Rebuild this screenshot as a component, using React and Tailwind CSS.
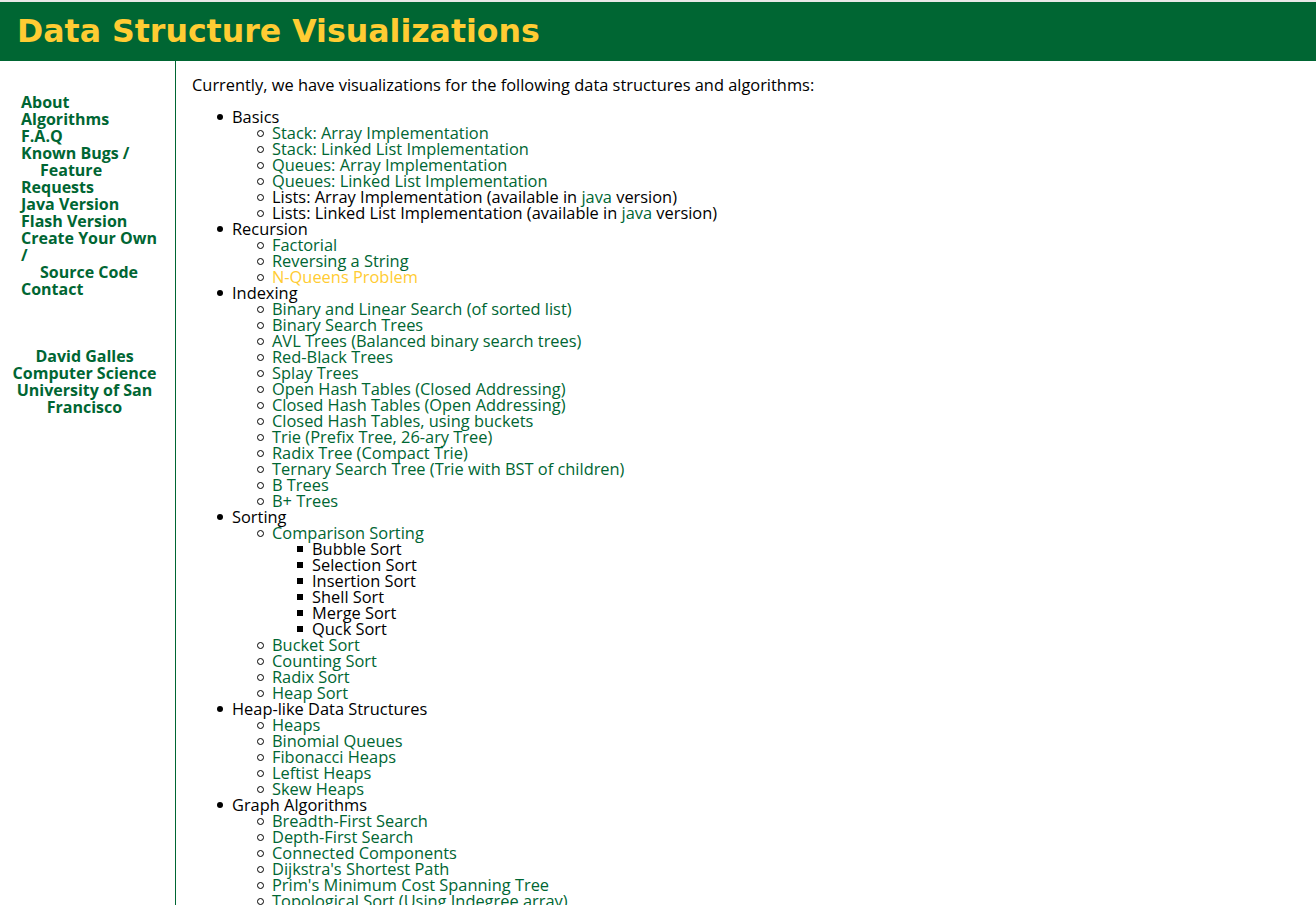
import React from "react";

function L({ children, y }) {
  return <span className={y ? "text-[#ffcc33]" : "text-[#006633]"}>{children}</span>;
}

const sub = (items) => (
  <ul className="pl-[40px]">
    {items.map((it, i) => (
      <li key={i} className="flex">
        <span className="w-[0px] relative">
          <span className="absolute left-[-15px] top-[5px] w-[7px] h-[7px] rounded-full border border-black"></span>
        </span>
        <span>{it}</span>
      </li>
    ))}
  </ul>
);

function Top({ label, children }) {
  return (
    <li className="flex flex-col">
      <div className="flex">
        <span className="w-0 relative">
          <span className="absolute left-[-15px] top-[5px] w-[6px] h-[6px] rounded-full bg-black"></span>
        </span>
        <span>{label}</span>
      </div>
      {children}
    </li>
  );
}

export default function App() {
  const font = { fontFamily: '"Open Sans", "Noto Sans", sans-serif' };
  return (
    <div className="min-h-[905px] bg-white" style={font}>
      <div className="h-[2px] bg-[#e8e8e8]"></div>
      <div className="h-[59px] bg-[#006633] flex items-center pl-[17px]">
        <h1
          className="text-[#ffcc33] text-[31.6px] font-bold leading-none"
          style={{ fontFamily: '"DejaVu Sans", Verdana, sans-serif' }}
        >
          Data Structure Visualizations
        </h1>
      </div>
      <div className="flex">
        <div className="w-[176px] shrink-0 border-r border-[#006633] min-h-[844px] pt-[33px] text-[16px] leading-[17px] font-bold text-[#006633]">
          <div className="pl-[21px]">
            <div>About</div>
            <div>Algorithms</div>
            <div>F.A.Q</div>
            <div>Known Bugs /</div>
            <div className="pl-[19px]">Feature</div>
            <div>Requests</div>
            <div>Java Version</div>
            <div>Flash Version</div>
            <div>Create Your Own</div>
            <div>/</div>
            <div className="pl-[19px]">Source Code</div>
            <div>Contact</div>
          </div>
          <div className="mt-[50px] text-center pr-[6px]">
            <div>David Galles</div>
            <div>Computer Science</div>
            <div>University of San</div>
            <div>Francisco</div>
          </div>
        </div>
        <div className="pl-[16px] pt-[15px] text-[16.4px] leading-[16px] text-black">
          <p className="leading-[18px]">Currently, we have visualizations for the following data structures and algorithms:</p>
          <ul className="pl-[40px] mt-[15px]">
            <Top label="Basics">
              {sub([
                <L>Stack: Array Implementation</L>,
                <L>Stack: Linked List Implementation</L>,
                <L>Queues: Array Implementation</L>,
                <L>Queues: Linked List Implementation</L>,
                <span>Lists: Array Implementation (available in <L>java</L> version)</span>,
                <span>Lists: Linked List Implementation (available in <L>java</L> version)</span>,
              ])}
            </Top>
            <Top label="Recursion">
              {sub([
                <L>Factorial</L>,
                <L>Reversing a String</L>,
                <L y>N-Queens Problem</L>,
              ])}
            </Top>
            <Top label="Indexing">
              {sub([
                <L>Binary and Linear Search (of sorted list)</L>,
                <L>Binary Search Trees</L>,
                <L>AVL Trees (Balanced binary search trees)</L>,
                <L>Red-Black Trees</L>,
                <L>Splay Trees</L>,
                <L>Open Hash Tables (Closed Addressing)</L>,
                <L>Closed Hash Tables (Open Addressing)</L>,
                <L>Closed Hash Tables, using buckets</L>,
                <L>Trie (Prefix Tree, 26-ary Tree)</L>,
                <L>Radix Tree (Compact Trie)</L>,
                <L>Ternary Search Tree (Trie with BST of children)</L>,
                <L>B Trees</L>,
                <L>B+ Trees</L>,
              ])}
            </Top>
            <Top label="Sorting">
              <ul className="pl-[40px]">
                <li className="flex flex-col">
                  <div className="flex">
                    <span className="w-0 relative">
                      <span className="absolute left-[-15px] top-[5px] w-[7px] h-[7px] rounded-full border border-black"></span>
                    </span>
                    <L>Comparison Sorting</L>
                  </div>
                  <ul className="pl-[40px]">
                    {["Bubble Sort", "Selection Sort", "Insertion Sort", "Shell Sort", "Merge Sort", "Quck Sort"].map((s) => (
                      <li key={s} className="flex">
                        <span className="w-0 relative">
                          <span className="absolute left-[-15px] top-[5px] w-[6px] h-[6px] bg-black"></span>
                        </span>
                        <span>{s}</span>
                      </li>
                    ))}
                  </ul>
                </li>
              </ul>
              {sub([
                <L>Bucket Sort</L>,
                <L>Counting Sort</L>,
                <L>Radix Sort</L>,
                <L>Heap Sort</L>,
              ])}
            </Top>
            <Top label="Heap-like Data Structures">
              {sub([
                <L>Heaps</L>,
                <L>Binomial Queues</L>,
                <L>Fibonacci Heaps</L>,
                <L>Leftist Heaps</L>,
                <L>Skew Heaps</L>,
              ])}
            </Top>
            <Top label="Graph Algorithms">
              {sub([
                <L>Breadth-First Search</L>,
                <L>Depth-First Search</L>,
                <L>Connected Components</L>,
                <L>Dijkstra's Shortest Path</L>,
                <L>Prim's Minimum Cost Spanning Tree</L>,
                <L>Topological Sort (Using Indegree array)</L>,
                <L>Topological Sort (Using DFS)</L>,
                <L>Floyd-Warshall (all pairs shortest paths)</L>,
                <L>Kruskal Minimum Cost Spanning Tree Algorithm</L>,
              ])}
            </Top>
          </ul>
        </div>
      </div>
    </div>
  );
}
